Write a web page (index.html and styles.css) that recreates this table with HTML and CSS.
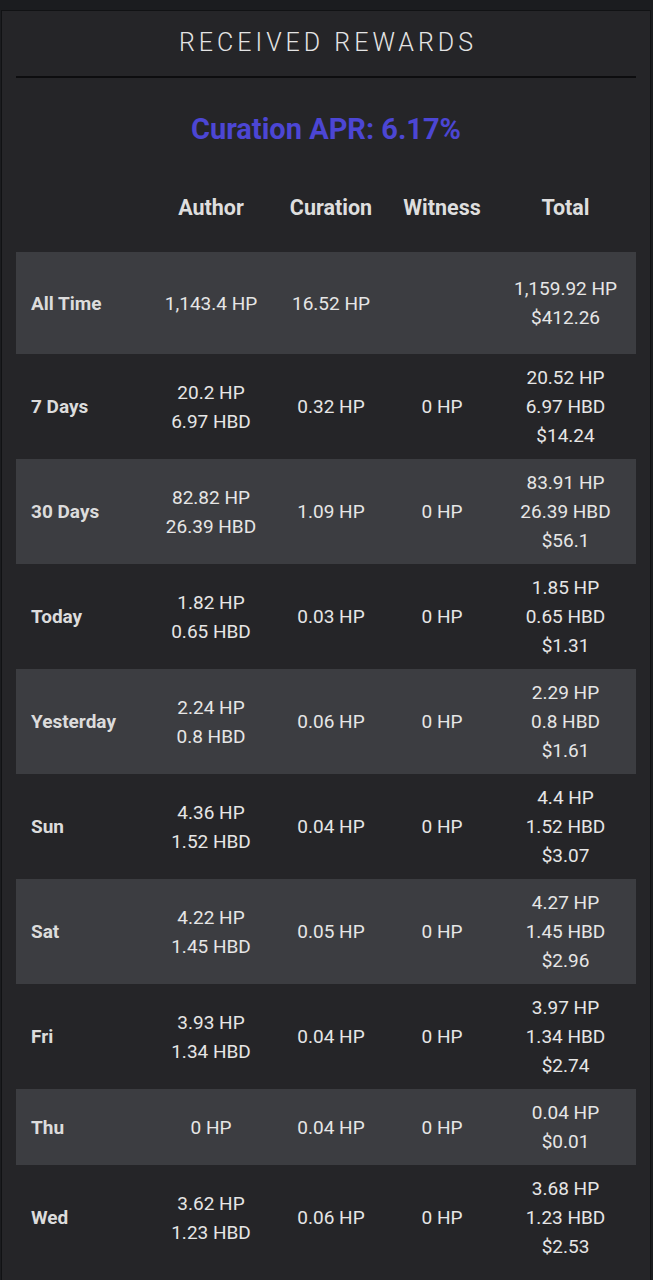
FILE: index.html
```html
<!DOCTYPE html>
<html>
<head>
<meta charset="utf-8">
<link rel="stylesheet" href="styles.css">
</head>
<body>
<div class="card">
  <h1 class="title">RECEIVED REWARDS</h1>
  <div class="divider"></div>
  <div class="apr">Curation APR: 6.17%</div>
  <div class="table">
    <div class="row head">
      <div class="label"></div>
      <div class="cell">Author</div>
      <div class="cell">Curation</div>
      <div class="cell">Witness</div>
      <div class="cell">Total</div>
    </div>
    <div class="row stripe tall">
      <div class="label">All Time</div>
      <div class="cell">1,143.4 HP</div>
      <div class="cell">16.52 HP</div>
      <div class="cell"></div>
      <div class="cell">1,159.92 HP<br>$412.26</div>
    </div>
    <div class="row">
      <div class="label">7 Days</div>
      <div class="cell">20.2 HP<br>6.97 HBD</div>
      <div class="cell">0.32 HP</div>
      <div class="cell">0 HP</div>
      <div class="cell">20.52 HP<br>6.97 HBD<br>$14.24</div>
    </div>
    <div class="row stripe">
      <div class="label">30 Days</div>
      <div class="cell">82.82 HP<br>26.39 HBD</div>
      <div class="cell">1.09 HP</div>
      <div class="cell">0 HP</div>
      <div class="cell">83.91 HP<br>26.39 HBD<br>$56.1</div>
    </div>
    <div class="row">
      <div class="label">Today</div>
      <div class="cell">1.82 HP<br>0.65 HBD</div>
      <div class="cell">0.03 HP</div>
      <div class="cell">0 HP</div>
      <div class="cell">1.85 HP<br>0.65 HBD<br>$1.31</div>
    </div>
    <div class="row stripe">
      <div class="label">Yesterday</div>
      <div class="cell">2.24 HP<br>0.8 HBD</div>
      <div class="cell">0.06 HP</div>
      <div class="cell">0 HP</div>
      <div class="cell">2.29 HP<br>0.8 HBD<br>$1.61</div>
    </div>
    <div class="row">
      <div class="label">Sun</div>
      <div class="cell">4.36 HP<br>1.52 HBD</div>
      <div class="cell">0.04 HP</div>
      <div class="cell">0 HP</div>
      <div class="cell">4.4 HP<br>1.52 HBD<br>$3.07</div>
    </div>
    <div class="row stripe">
      <div class="label">Sat</div>
      <div class="cell">4.22 HP<br>1.45 HBD</div>
      <div class="cell">0.05 HP</div>
      <div class="cell">0 HP</div>
      <div class="cell">4.27 HP<br>1.45 HBD<br>$2.96</div>
    </div>
    <div class="row">
      <div class="label">Fri</div>
      <div class="cell">3.93 HP<br>1.34 HBD</div>
      <div class="cell">0.04 HP</div>
      <div class="cell">0 HP</div>
      <div class="cell">3.97 HP<br>1.34 HBD<br>$2.74</div>
    </div>
    <div class="row stripe">
      <div class="label">Thu</div>
      <div class="cell">0 HP</div>
      <div class="cell">0.04 HP</div>
      <div class="cell">0 HP</div>
      <div class="cell">0.04 HP<br>$0.01</div>
    </div>
    <div class="row">
      <div class="label">Wed</div>
      <div class="cell">3.62 HP<br>1.23 HBD</div>
      <div class="cell">0.06 HP</div>
      <div class="cell">0 HP</div>
      <div class="cell">3.68 HP<br>1.23 HBD<br>$2.53</div>
    </div>
  </div>
</div>
</body>
</html>
```
FILE: styles.css
```css
html, body {
  margin: 0;
  padding: 0;
  background: #1b1c1f;
}
body {
  padding-top: 10px;
  font-family: Roboto, "Liberation Sans", sans-serif;
  color: #e6e6e6;
  height: 1270px;
  overflow: hidden;
}
.card {
  margin-left: 1px;
  width: 650px;
  box-sizing: border-box;
  background: #252528;
  border: 1px solid #111214;
  border-bottom: none;
  padding: 0 14px 20px;
  min-height: 1300px;
}
.title {
  margin: 0;
  padding-top: 16px;
  font-size: 25px;
  line-height: 32px;
  font-weight: 300;
  letter-spacing: 4px;
  text-indent: 4px;
  text-align: center;
  color: #e4e4e4;
}
.divider {
  margin-top: 17px;
  height: 2px;
  background: #0d0d0f;
}
.apr {
  margin-top: 33px;
  font-size: 29px;
  line-height: 36px;
  font-weight: 700;
  color: #4c46d4;
  text-align: center;
}
.table {
  margin-top: 46px;
}
.row {
  display: grid;
  grid-template-columns: 134px 122px 118px 104px 143px;
  align-items: center;
  padding: 9px 0;
  font-size: 19px;
  line-height: 29px;
}
.row.head {
  padding: 0 0 29px;
  font-size: 21.5px;
  line-height: 30px;
  font-weight: 700;
  color: #dedede;
}
.row.stripe {
  background: #3c3d41;
}
.row.tall {
  min-height: 102px;
  box-sizing: border-box;
}
.label {
  padding-left: 15px;
  font-weight: 700;
  color: #dcdcdc;
}
.cell {
  text-align: center;
}
```
